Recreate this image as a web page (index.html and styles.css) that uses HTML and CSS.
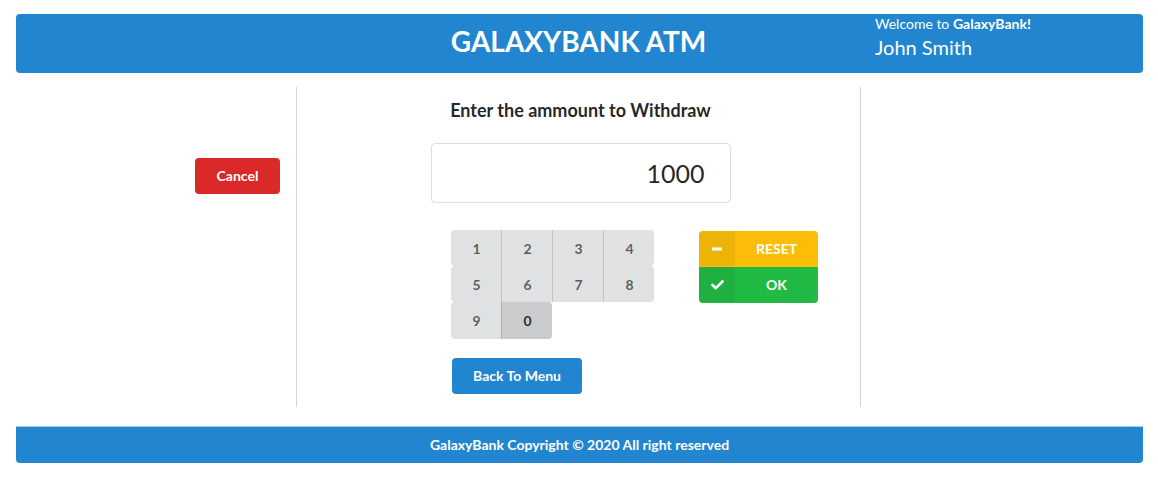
FILE: index.html
```html
<!DOCTYPE html>
<html lang="en">
<head>
<meta charset="utf-8">
<title>GalaxyBank ATM</title>
<link rel="stylesheet" href="styles.css">
</head>
<body>
<div class="page">
  <header class="topbar">
    <div class="topbar-side"></div>
    <h1 class="title">GALAXYBANK ATM</h1>
    <div class="user">
      <div class="welcome">Welcome to <b>GalaxyBank!</b></div>
      <div class="username">John Smith</div>
    </div>
  </header>

  <main class="main">
    <div class="col-left">
      <button class="btn btn-red">Cancel</button>
    </div>
    <div class="col-mid">
      <h3 class="prompt">Enter the ammount to Withdraw</h3>
      <div class="amount">1000</div>
      <div class="pad-area">
        <div class="keypad">
          <div class="key-row">
            <button class="key">1</button><button class="key">2</button><button class="key">3</button><button class="key">4</button>
          </div>
          <div class="key-row">
            <button class="key">5</button><button class="key">6</button><button class="key">7</button><button class="key">8</button>
          </div>
          <div class="key-row">
            <button class="key">9</button><button class="key key-active">0</button>
          </div>
        </div>
        <div class="actions">
          <button class="act act-yellow">
            <span class="act-icon"><svg width="12" height="4" viewBox="0 0 12 4"><rect x="1" y="0.5" width="10" height="3" fill="#fff"/></svg></span>
            <span class="act-label">RESET</span>
          </button>
          <button class="act act-green">
            <span class="act-icon"><svg width="13" height="10" viewBox="0 0 13 10"><path d="M1.5 5 L4.8 8.2 L11.5 1.5" fill="none" stroke="#fff" stroke-width="2.6" stroke-linecap="round" stroke-linejoin="round"/></svg></span>
            <span class="act-label">OK</span>
          </button>
        </div>
      </div>
      <div class="back-wrap">
        <button class="btn btn-blue">Back To Menu</button>
      </div>
    </div>
    <div class="col-right"></div>
  </main>

  <footer class="footer">GalaxyBank Copyright © 2020 All right reserved</footer>
</div>
</body>
</html>
```

FILE: styles.css
```css
* { box-sizing: border-box; }

body {
  margin: 0;
  font-family: Lato, "Open Sans", "Liberation Sans", sans-serif;
  font-size: 14px;
  color: rgba(0, 0, 0, 0.87);
  background: #fff;
}

.page {
  padding: 14px 15px 0 16px;
}

.topbar {
  display: grid;
  grid-template-columns: 280px 565px 1fr;
  height: 59px;
  background: #2185d0;
  border-radius: 4px;
  color: #fff;
}

.title {
  margin: 0;
  padding-top: 13px;
  text-align: center;
  font-size: 28px;
  line-height: 28px;
  font-weight: 700;
}

.user {
  padding-left: 14px;
}

.welcome {
  font-size: 14px;
  line-height: 20px;
}

.username {
  margin-top: 1px;
  font-size: 20px;
  line-height: 24px;
}

.main {
  display: grid;
  grid-template-columns: 280px 565px 1fr;
  margin-top: 14px;
}

.col-left {
  display: flex;
  justify-content: flex-end;
  align-items: flex-start;
  padding: 71px 16px 0 0;
}

.col-mid {
  border-left: 1px solid #d4d4d5;
  border-right: 1px solid #d4d4d5;
  display: flex;
  flex-direction: column;
  align-items: center;
  padding: 12px 0 13px 4px;
}

.btn {
  font-family: inherit;
  font-size: 14px;
  font-weight: 700;
  line-height: 14px;
  height: 36px;
  border: none;
  border-radius: 4px;
  color: #fff;
  padding: 0;
  cursor: pointer;
}

.btn-red { background: #db2828; width: 85px; }
.btn-blue { background: #2185d0; width: 130px; }

.prompt {
  margin: 0;
  font-size: 18px;
  line-height: 23px;
  font-weight: 700;
}

.amount {
  margin-top: 21px;
  width: 300px;
  height: 60px;
  border: 1px solid rgba(34, 36, 38, 0.15);
  border-radius: 4px;
  text-align: right;
  padding-right: 25px;
  font-size: 25px;
  line-height: 58px;
  color: rgba(0, 0, 0, 0.87);
}

.pad-area {
  align-self: stretch;
  display: flex;
  align-items: flex-start;
  gap: 45px;
  margin-top: 27px;
  padding-left: 150px;
}

.keypad {
  display: flex;
  flex-direction: column;
}

.key-row {
  display: flex;
}

.key-row:last-child .key { height: 37px; }

.key {
  width: 51px;
  height: 36px;
  border: none;
  border-left: 1px solid rgba(34, 36, 38, 0.15);
  background: #e0e1e2;
  color: rgba(0, 0, 0, 0.6);
  font-family: inherit;
  font-size: 14px;
  font-weight: 700;
  padding: 0 0 0 1px;
  cursor: pointer;
}

.key:first-child {
  width: 50px;
  border-left: none;
  border-radius: 4px 0 0 4px;
}

.key:last-child {
  border-radius: 0 4px 4px 0;
}

.key-active {
  background: #cacbcd;
  color: rgba(0, 0, 0, 0.8);
}

.actions {
  display: flex;
  flex-direction: column;
  width: 119px;
  margin-top: 1px;
}

.act {
  display: flex;
  align-items: stretch;
  height: 36px;
  border: none;
  padding: 0 0 1px;
  color: #fff;
  font-family: inherit;
  font-size: 14px;
  font-weight: 700;
  cursor: pointer;
}

.act-yellow { background: #fbbd08; border-radius: 4px 4px 0 0; }
.act-green { background: #21ba45; border-radius: 0 0 4px 4px; }

.act-icon {
  width: 36px;
  display: flex;
  align-items: center;
  justify-content: center;
  background: rgba(0, 0, 0, 0.05);
}

.act-yellow .act-icon { border-radius: 4px 0 0 0; }
.act-green .act-icon { border-radius: 0 0 0 4px; }

.act-label {
  flex: 1;
  display: flex;
  align-items: center;
  justify-content: center;
}

.back-wrap {
  align-self: stretch;
  margin-top: 19px;
  padding-left: 151px;
}

.footer {
  margin-top: 19px;
  height: 37px;
  padding-bottom: 1px;
  background: #2185d0;
  border-top: 1px solid #a9cdee;
  border-radius: 0 0 4px 4px;
  color: #fff;
  font-weight: 700;
  font-size: 14px;
  display: flex;
  align-items: center;
  justify-content: center;
}
```
